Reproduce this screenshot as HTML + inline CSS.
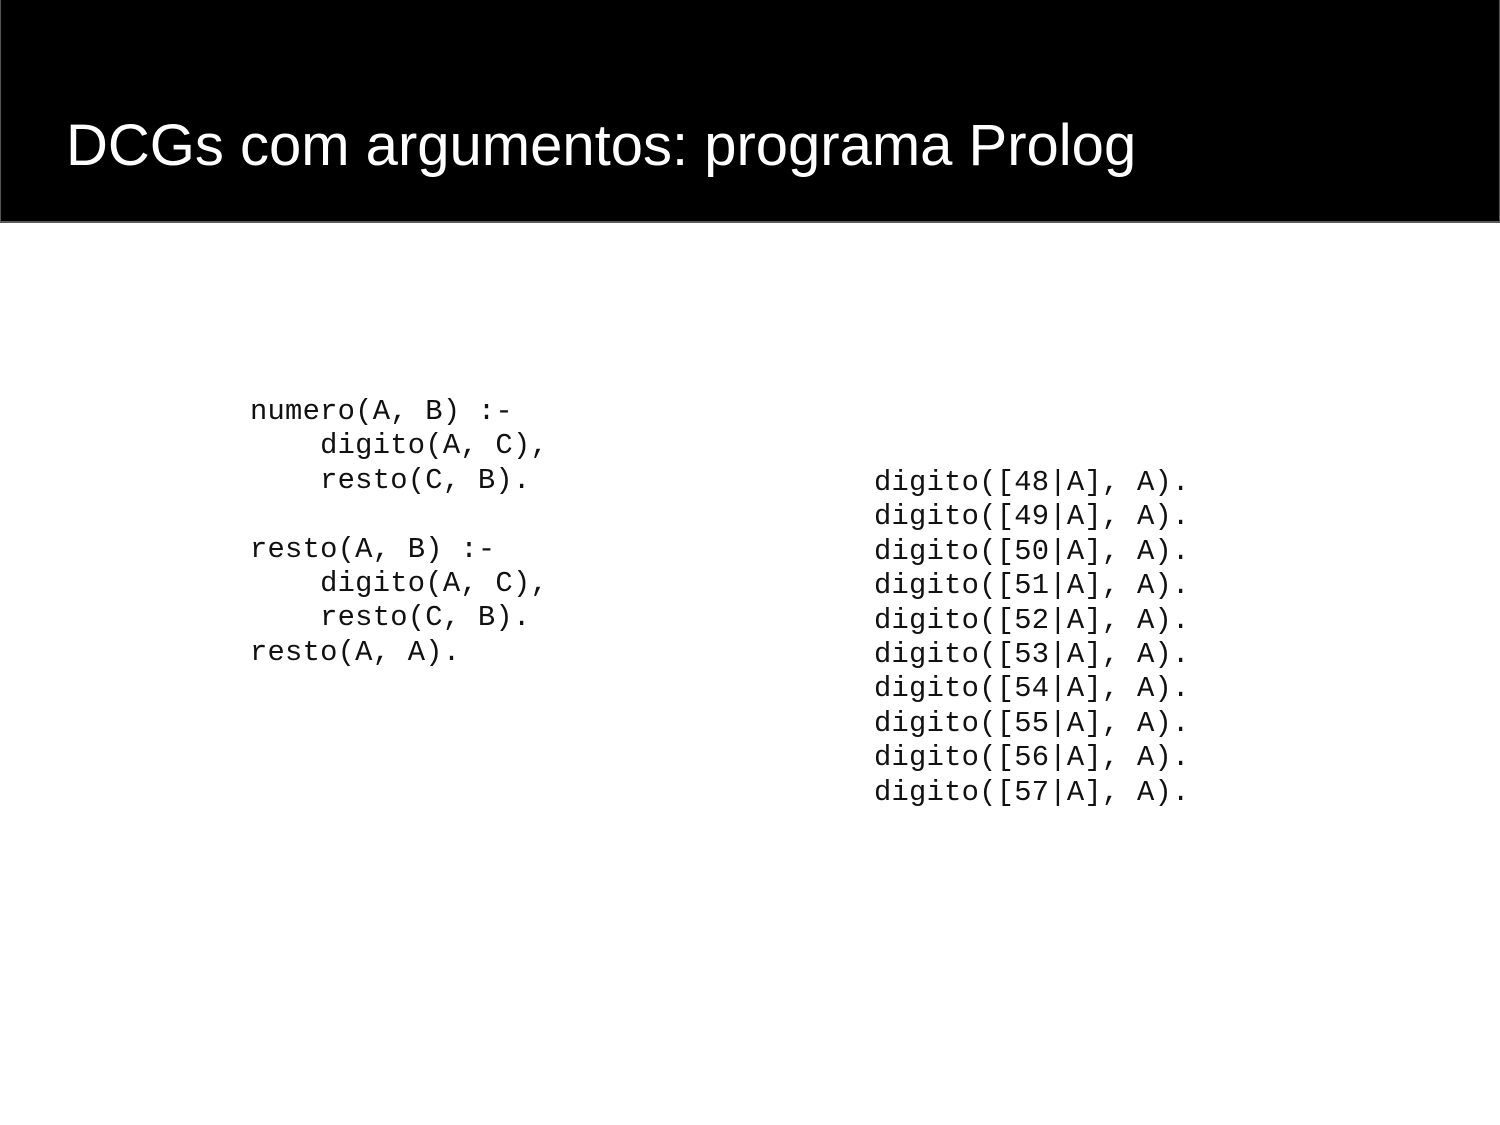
<!DOCTYPE html>
<html><head><style>
body{margin:0;width:1500px;height:1125px;background:#fff;position:relative;overflow:hidden}
.hd{position:absolute;left:0;top:0;width:1500px;height:221px;background:#000;border-bottom:2px solid #5a5a5a;box-sizing:content-box}
.hd:before{content:"";position:absolute;left:0;top:0;width:1px;height:221px;background:#555}
.hd:after{content:"";position:absolute;right:0;top:0;width:1px;height:221px;background:#555}
.t{position:absolute;left:66px;top:111px;font:58px/70px "Liberation Sans",sans-serif;color:#fff;white-space:nowrap}
pre{position:absolute;margin:0;font:28.8px/34.4px "Liberation Mono",monospace;letter-spacing:0.25px;color:#111}
</style></head><body>
<div class="hd"><div class="t">DCGs com argumentos: programa Prolog</div></div>
<pre style="left:250px;top:395px">numero(A, B) :-
    digito(A, C),
    resto(C, B).

resto(A, B) :-
    digito(A, C),
    resto(C, B).
resto(A, A).</pre>
<pre style="left:874px;top:466px">digito([48|A], A).
digito([49|A], A).
digito([50|A], A).
digito([51|A], A).
digito([52|A], A).
digito([53|A], A).
digito([54|A], A).
digito([55|A], A).
digito([56|A], A).
digito([57|A], A).</pre>
</body></html>
